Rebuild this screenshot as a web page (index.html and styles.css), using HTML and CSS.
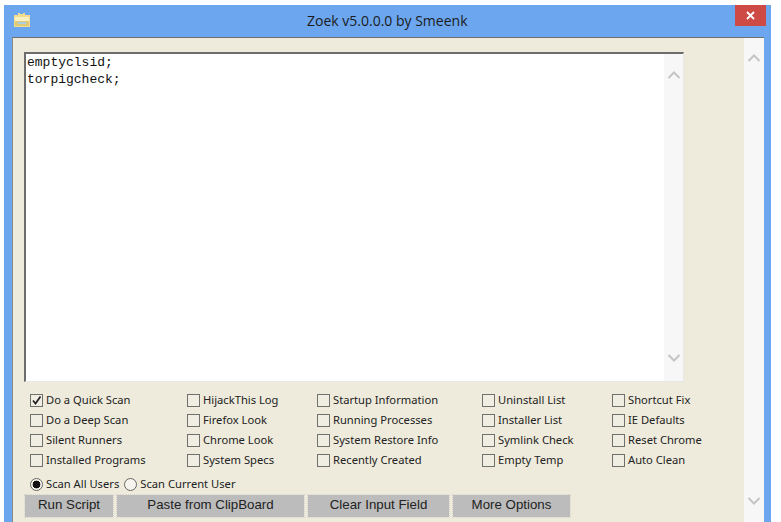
FILE: index.html
```html
<!DOCTYPE html>
<html lang="en">
<head>
<meta charset="utf-8">
<title>Zoek</title>
<link rel="stylesheet" href="styles.css">
</head>
<body>
<div class="window">
  <div class="titlebar">
    <svg class="app-icon" width="16" height="16" viewBox="0 0 16 16">
      <path d="M0 3h4V1h2v1h3V1h2v2h5v12H0z" fill="#f3dc8e"/>
      <path d="M1 5h14v4H1z" fill="#fbf0c0"/>
      <path d="M1 9h14v5H1z" fill="#dfc878"/>
      <path d="M4 10h8v2H4z" fill="#a9cfe0"/>
    </svg>
    <div class="title">Zoek v5.0.0.0 by Smeenk</div>
    <div class="close"><svg width="9" height="9" viewBox="0 0 9 9"><path d="M1 1l7 7M8 1L1 8" stroke="#fff" stroke-width="1.8" fill="none"/></svg></div>
  </div>
  <div class="client">
    <div class="main">
      <div class="editor">
        <div class="editor-text">emptyclsid;<br>torpigcheck;</div>
        <div class="scrollbar inner">
          <svg class="chev" width="14" height="8" viewBox="0 0 14 8"><path d="M1.5 7L7 1.5 12.5 7" stroke="#c4c4c4" stroke-width="2" fill="none"/></svg>
          <svg class="chev" width="14" height="8" viewBox="0 0 14 8"><path d="M1.5 1L7 6.5 12.5 1" stroke="#c4c4c4" stroke-width="2" fill="none"/></svg>
        </div>
      </div>
      <div class="options">
        <div class="col col1">
          <label class="opt"><span class="box"><svg width="11" height="11" viewBox="0 0 11 11"><path d="M2 5.5l2.5 3L9.5 1.5" stroke="#222" stroke-width="1.7" fill="none"/></svg></span>Do a Quick Scan</label>
          <label class="opt"><span class="box"></span>Do a Deep Scan</label>
          <label class="opt"><span class="box"></span>Silent Runners</label>
          <label class="opt"><span class="box"></span>Installed Programs</label>
        </div>
        <div class="col col2">
          <label class="opt"><span class="box"></span>HijackThis Log</label>
          <label class="opt"><span class="box"></span>Firefox Look</label>
          <label class="opt"><span class="box"></span>Chrome Look</label>
          <label class="opt"><span class="box"></span>System Specs</label>
        </div>
        <div class="col col3">
          <label class="opt"><span class="box"></span>Startup Information</label>
          <label class="opt"><span class="box"></span>Running Processes</label>
          <label class="opt"><span class="box"></span>System Restore Info</label>
          <label class="opt"><span class="box"></span>Recently Created</label>
        </div>
        <div class="col col4">
          <label class="opt"><span class="box"></span>Uninstall List</label>
          <label class="opt"><span class="box"></span>Installer List</label>
          <label class="opt"><span class="box"></span>Symlink Check</label>
          <label class="opt"><span class="box"></span>Empty Temp</label>
        </div>
        <div class="col col5">
          <label class="opt"><span class="box"></span>Shortcut Fix</label>
          <label class="opt"><span class="box"></span>IE Defaults</label>
          <label class="opt"><span class="box"></span>Reset Chrome</label>
          <label class="opt"><span class="box"></span>Auto Clean</label>
        </div>
      </div>
      <div class="radios">
        <label class="radio-opt"><span class="radio on"></span>Scan All Users</label>
        <label class="radio-opt"><span class="radio"></span>Scan Current User</label>
      </div>
      <div class="buttons">
        <div class="btn btn-run">Run Script</div>
        <div class="btn btn-paste">Paste from ClipBoard</div>
        <div class="btn btn-clear">Clear Input Field</div>
        <div class="btn btn-more">More Options</div>
      </div>
    </div>
    <div class="scrollbar outer">
      <svg class="chev" width="14" height="8" viewBox="0 0 14 8"><path d="M1.5 7L7 1.5 12.5 7" stroke="#c4c4c4" stroke-width="2" fill="none"/></svg>
      <svg class="chev" width="14" height="8" viewBox="0 0 14 8"><path d="M1.5 1L7 6.5 12.5 1" stroke="#c4c4c4" stroke-width="2" fill="none"/></svg>
    </div>
  </div>
</div>
</body>
</html>
```

FILE: styles.css
```css
html, body {
  margin: 0;
  padding: 0;
  height: 100%;
  background: #fff;
  overflow: hidden;
}
.window {
  box-sizing: border-box;
  width: 767px;
  height: 517px;
  margin: 5px 0 0 4px;
  background: #6ba6ef;
  padding: 0 7px 0 8px;
  display: flex;
  flex-direction: column;
}
.titlebar {
  height: 32px;
  flex: none;
  display: flex;
  align-items: flex-start;
  position: relative;
}
.app-icon {
  margin: 7px 0 0 2px;
}
.title {
  position: absolute;
  left: 295px;
  top: 6px;
  font: 14px/20px "Open Sans", sans-serif;
  color: #1c1c1c;
  white-space: nowrap;
}
.close {
  position: absolute;
  right: -2px;
  top: 0;
  width: 31px;
  height: 21px;
  background: #cd4a45;
  display: flex;
  align-items: center;
  justify-content: center;
}
.client {
  flex: 1;
  display: flex;
  background: #eeebdc;
  border-top: 1px solid #6f6f6f;
  border-left: 1px solid #8c8c86;
  min-height: 0;
}
.main {
  flex: 1;
  padding: 14px 0 0 11px;
  display: flex;
  flex-direction: column;
}
.editor {
  box-sizing: border-box;
  width: 660px;
  height: 330px;
  flex: none;
  display: flex;
  background: #fff;
  border-top: 2px solid #6d6d6d;
  border-left: 2px solid #6d6d6d;
  border-right: 1px solid #e8e8e8;
  border-bottom: 1px solid #e8e8e8;
}
.editor-text {
  flex: 1;
  padding: 0 0 0 1px;
  font: 13px/17px "Liberation Mono", monospace;
  color: #111;
}
.scrollbar {
  width: 19px;
  background: #f7f7f7;
  display: flex;
  flex-direction: column;
  justify-content: space-between;
  align-items: center;
  flex: none;
}
.scrollbar.inner {
  padding: 17px 0 19px;
}
.scrollbar.outer {
  box-sizing: border-box;
  padding: 16px 0 17px;
  width: 20px;
  height: 100%;
}
.chev {
  display: block;
}
.options {
  display: flex;
  margin: 11px 0 0 6px;
}
.col {
  display: flex;
  flex-direction: column;
  gap: 6px;
}
.col1 { width: 157px; }
.col2 { width: 130px; }
.col3 { width: 165px; }
.col4 { width: 130px; }
.opt, .radio-opt {
  display: flex;
  align-items: center;
  font: 11.2px/14px "Noto Sans", sans-serif;
  color: #222;
  white-space: nowrap;
}
.box {
  box-sizing: border-box;
  width: 13px;
  height: 13px;
  margin-right: 3px;
  border: 1px solid #70706c;
  background: #f0eee2;
  display: flex;
  align-items: center;
  justify-content: center;
}
.radios {
  display: flex;
  margin: 10px 0 0 6px;
  gap: 5px;
}
.radio {
  box-sizing: border-box;
  width: 13px;
  height: 13px;
  margin-right: 3px;
  border: 1px solid #666;
  border-radius: 50%;
  background: #f6f4ec;
  display: block;
}
.radio.on {
  background: radial-gradient(circle, #111 0 3.6px, #f6f4ec 4.2px);
}
.buttons {
  display: flex;
  gap: 4px;
  margin: 4px 0 0 1px;
}
.btn {
  box-sizing: border-box;
  height: 22px;
  background: #bcbcbc;
  outline: 1px dotted #d8d6ca;
  font: 13.3px/20px "Liberation Sans", sans-serif;
  color: #222;
  text-align: center;
}
.btn-run { width: 88px; }
.btn-paste { width: 187px; }
.btn-clear { width: 141px; }
.btn-more { width: 117px; }
```
